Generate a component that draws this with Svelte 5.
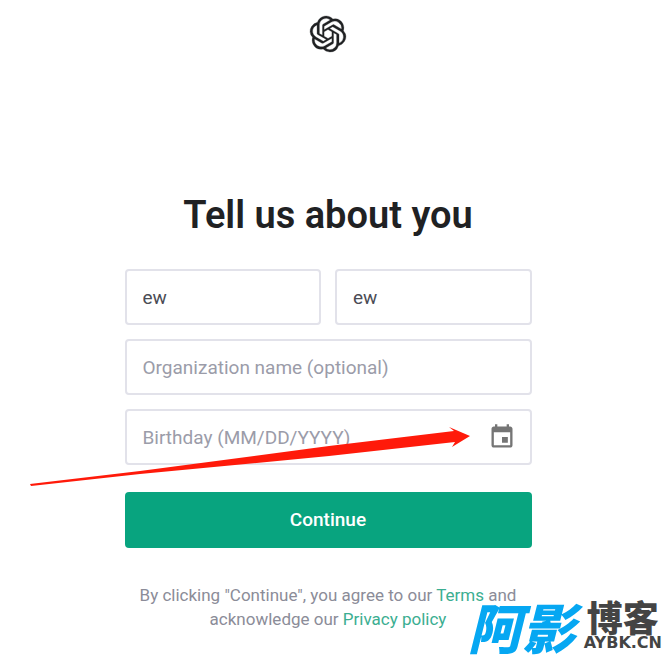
<script lang="ts">
  let firstName = $state('ew');
  let lastName = $state('ew');
  let organization = $state('');
  let birthday = $state('');

  function handleSubmit(event: SubmitEvent) {
    event.preventDefault();
  }
</script>

<div class="page">
  <header class="page-header">
    <svg class="logo" viewBox="0 0 24 24" role="img" aria-label="OpenAI">
      <path
        d="M22.2819 9.8211a5.9847 5.9847 0 0 0-.5157-4.9108 6.0462 6.0462 0 0 0-6.5098-2.9A6.0651 6.0651 0 0 0 4.9807 4.1818a5.9847 5.9847 0 0 0-3.9977 2.9 6.0462 6.0462 0 0 0 .7427 7.0966 5.98 5.98 0 0 0 .511 4.9107 6.051 6.051 0 0 0 6.5146 2.9001A5.9847 5.9847 0 0 0 13.2599 24a6.0557 6.0557 0 0 0 5.7718-4.2058 5.9894 5.9894 0 0 0 3.9977-2.9001 6.0557 6.0557 0 0 0-.7475-7.0729zm-9.022 12.6081a4.4755 4.4755 0 0 1-2.8764-1.0408l.1419-.0804 4.7783-2.7582a.7948.7948 0 0 0 .3927-.6813v-6.7369l2.02 1.1686a.071.071 0 0 1 .038.052v5.5826a4.504 4.504 0 0 1-4.4945 4.4944zm-9.6607-4.1254a4.4708 4.4708 0 0 1-.5346-3.0137l.142.0852 4.783 2.7582a.7712.7712 0 0 0 .7806 0l5.8428-3.3685v2.3324a.0804.0804 0 0 1-.0332.0615L9.74 19.9502a4.4992 4.4992 0 0 1-6.1408-1.6464zM2.3408 7.8956a4.485 4.485 0 0 1 2.3655-1.9728V11.6a.7664.7664 0 0 0 .3879.6765l5.8144 3.3543-2.0201 1.1685a.0757.0757 0 0 1-.071 0l-4.8303-2.7865A4.504 4.504 0 0 1 2.3408 7.872zm16.5963 3.8558L13.1038 8.364 15.1192 7.2a.0757.0757 0 0 1 .071 0l4.8303 2.7913a4.4944 4.4944 0 0 1-.6765 8.1042v-5.6772a.79.79 0 0 0-.407-.667zm2.0107-3.0231l-.142-.0852-4.7735-2.7818a.7759.7759 0 0 0-.7854 0L9.409 9.2297V6.8974a.0662.0662 0 0 1 .0284-.0615l4.8303-2.7866a4.4992 4.4992 0 0 1 6.6802 4.66zM8.3065 12.863l-2.02-1.1638a.0804.0804 0 0 1-.038-.0567V6.0742a4.4992 4.4992 0 0 1 7.3757-3.4537l-.142.0805L8.704 5.459a.7948.7948 0 0 0-.3927.6813zm1.0976-2.3654l2.602-1.4998 2.6069 1.4998v2.9994l-2.5974 1.4997-2.6067-1.4997Z"
      />
    </svg>
  </header>

  <main class="content">
    <h1>Tell us about you</h1>

    <form onsubmit={handleSubmit}>
      <div class="name-row">
        <input class="field" type="text" aria-label="First name" bind:value={firstName} />
        <input class="field" type="text" aria-label="Last name" bind:value={lastName} />
      </div>

      <input
        class="field"
        type="text"
        aria-label="Organization name (optional)"
        placeholder="Organization name (optional)"
        bind:value={organization}
      />

      <div class="field date-field">
        <input
          type="text"
          aria-label="Birthday (MM/DD/YYYY)"
          placeholder="Birthday (MM/DD/YYYY)"
          bind:value={birthday}
        />
        <button class="calendar-button" type="button" aria-label="Choose date">
          <svg viewBox="0 0 24 24" aria-hidden="true">
            <path
              d="M17 12h-5v5h5v-5zM16 1v2H8V1H6v2H5c-1.11 0-1.99.9-1.99 2L3 19c0 1.1.89 2 2 2h14c1.1 0 2-.9 2-2V5c0-1.1-.9-2-2-2h-1V1h-2zm3 18H5V8h14v11z"
            />
          </svg>
        </button>

        <!-- pointer to the calendar button -->
        <svg class="arrow" viewBox="0 0 440 60" aria-hidden="true">
          <path d="M0 57L110 44L299 19L424 4L419 0L440 9L422 20L425 15L299 29L110 47L1 59Z" />
        </svg>
      </div>

      <button class="submit-button" type="submit">Continue</button>
    </form>

    <p class="terms">
      By clicking "Continue", you agree to our <a href="#terms">Terms</a> and acknowledge our
      <a href="#privacy">Privacy policy</a>
    </p>
  </main>

  <div class="watermark">
    <span class="mark-main">阿影</span>
    <div class="mark-side">
      <span class="mark-blog">博客</span>
      <span class="mark-domain">AYBK.CN</span>
    </div>
  </div>
</div>

<style>
  :global(body) {
    margin: 0;
    background: #ffffff;
  }

  .page {
    position: relative;
    box-sizing: border-box;
    min-height: 100vh;
    padding: 16px 23px 32px 12px;
    font-family: Roboto, 'Noto Sans CJK SC', sans-serif;
    color: #202123;
  }

  .page-header {
    display: flex;
    justify-content: center;
  }

  .logo {
    width: 36px;
    height: 36px;
    fill: #202123;
    stroke: #202123;
    stroke-width: 0.2;
    overflow: visible;
  }

  .content {
    max-width: 407px;
    margin: 141px auto 0;
  }

  h1 {
    margin: 0;
    font-size: 38px;
    font-weight: 600;
    line-height: 45px;
    text-align: center;
    white-space: nowrap;
  }

  form {
    display: flex;
    flex-direction: column;
    gap: 14px;
    margin-top: 31px;
  }

  .name-row {
    display: grid;
    grid-template-columns: 1fr 1fr;
    gap: 14px;
  }

  .field {
    box-sizing: border-box;
    width: 100%;
    min-width: 0;
    height: 56px;
    padding: 0 16px;
    border: 2px solid #e2e2ea;
    border-radius: 4px;
    background: #ffffff;
  }

  input {
    font-family: inherit;
    font-size: 19px;
    color: #4b4c55;
    outline: none;
  }

  input::placeholder {
    color: #9b9ca9;
    opacity: 1;
  }

  .date-field {
    position: relative;
    display: flex;
    align-items: center;
    justify-content: space-between;
    padding-right: 14px;
  }

  .date-field input {
    flex: 1;
    min-width: 0;
    padding: 0;
    border: none;
    background: transparent;
  }

  .calendar-button {
    display: flex;
    padding: 0;
    border: none;
    background: none;
    cursor: pointer;
  }

  .calendar-button svg {
    width: 28px;
    height: 28px;
    fill: #757575;
  }

  .arrow {
    position: absolute;
    right: 60px;
    top: 16px;
    width: 440px;
    height: 60px;
    fill: #ff1a0a;
    pointer-events: none;
  }

  .submit-button {
    height: 56px;
    margin-top: 13px;
    padding: 0 0 2px;
    border: none;
    border-radius: 4px;
    background: #08a47f;
    color: #ffffff;
    font-family: inherit;
    font-size: 19px;
    font-weight: 500;
    cursor: pointer;
  }

  .terms {
    margin: 35px 0 0;
    font-size: 17px;
    line-height: 24px;
    color: #8b8c98;
    text-align: center;
  }

  .terms a {
    color: #3bae91;
    text-decoration: none;
  }

  .watermark {
    position: absolute;
    right: 5px;
    bottom: 14px;
    display: flex;
    align-items: center;
    gap: 8px;
    font-weight: 900;
    white-space: nowrap;
  }

  .mark-main {
    font-family: 'Noto Sans CJK SC', sans-serif;
    font-size: 54px;
    font-style: italic;
    line-height: 56px;
    color: #06a7f2;
  }

  .mark-side {
    display: flex;
    flex-direction: column;
    align-items: center;
  }

  .mark-blog {
    font-family: 'Noto Sans CJK SC', sans-serif;
    font-size: 36px;
    line-height: 34px;
    color: #444444;
  }

  .mark-domain {
    font-family: 'DejaVu Sans', sans-serif;
    font-size: 16px;
    line-height: 20px;
    color: #444444;
  }
</style>
